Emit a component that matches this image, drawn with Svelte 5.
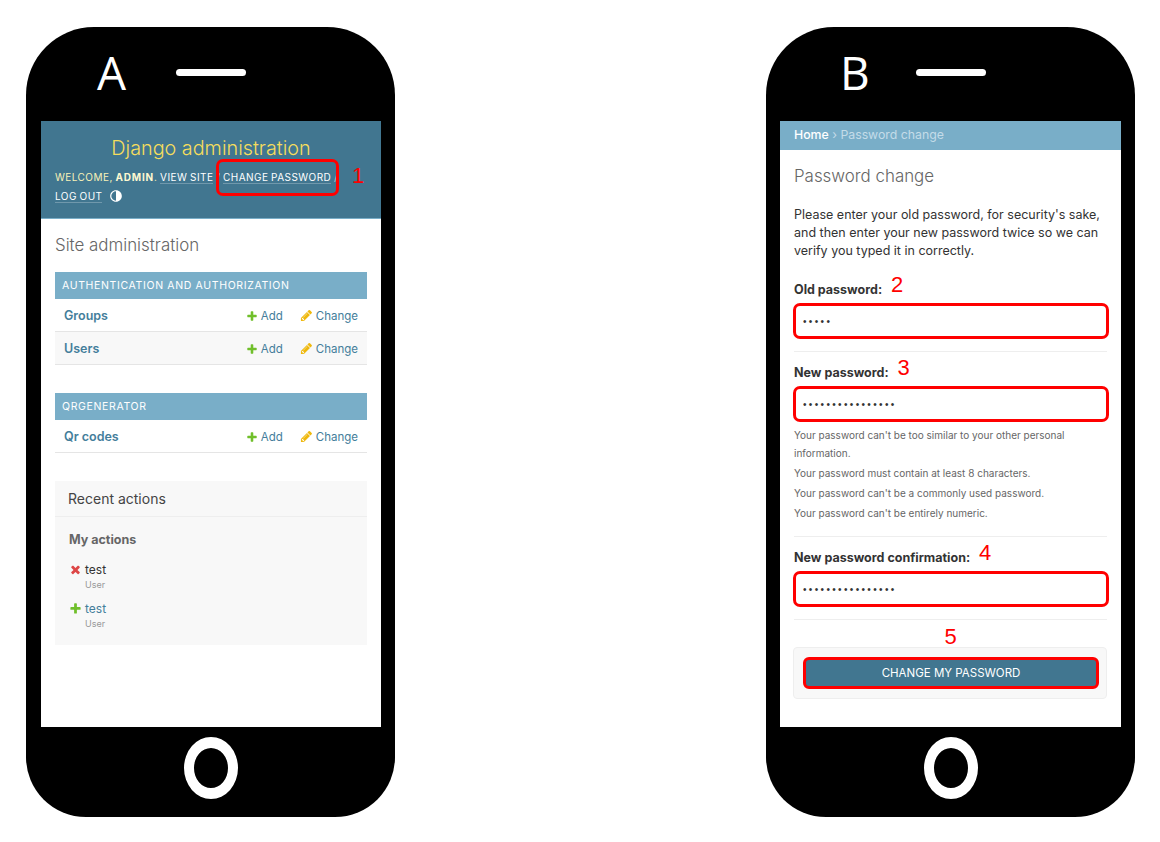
<script>
  const pw = "pw-placeholder-x";

  const modules = [
    { caption: "Authentication and Authorization", rows: ["Groups", "Users"] },
    { caption: "Qrgenerator", rows: ["Qr codes"] },
  ];

  const plus = "M1600 796v192q0 40-28 68t-68 28h-416v416q0 40-28 68t-68 28h-192q-40 0-68-28t-28-68v-416h-416q-40 0-68-28t-28-68v-192q0-40 28-68t68-28h416v-416q0-40 28-68t68-28h192q40 0 68 28t28 68v416h416q40 0 68 28t28 68z";
  const pencil = "M491 1536l91-91-235-235-91 91v107h128v128h107zm523-928q0-22-22-22-10 0-17 7l-542 542q-7 7-7 17 0 22 22 22 10 0 17-7l542-542q7-7 7-17zm-54-192l416 416-832 832h-416v-416zm683 96q0 53-37 90l-166 166-416-416 166-165q36-38 90-38 53 0 91 38l235 234q37 39 37 91z";
  const cross = "M1490 1322q0 40-28 68l-136 136q-28 28-68 28t-68-28l-294-294-294 294q-28 28-68 28t-68-28l-136-136q-28-28-28-68t28-68l294-294-294-294q-28-28-28-68t28-68l136-136q28-28 68-28t68 28l294 294 294-294q28-28 68-28t68 28l136 136q28 28 28 68t-28 68l-294 294 294 294q28 28 28 68z";
</script>

<main class="page">
  <!-- phone A: admin index -->
  <section class="phone">
    <div class="top">
      <span class="letter">A</span>
      <span class="speaker"></span>
    </div>
    <div class="screen">
      <header class="site-header">
        <div class="brand">Django administration</div>
        <div class="tools">
          <span class="welcome">Welcome, <b>admin</b>.</span>
          <a href="#site">View site</a> /
          <a href="#pw">Change password</a> /
          <br />
          <a href="#out">Log out</a>
          <svg class="toggle" viewBox="0 0 24 24" width="14" height="14">
            <path fill="#fff" d="M12 22C6.477 22 2 17.523 2 12S6.477 2 12 2s10 4.477 10 10-4.477 10-10 10zm0-2V4a8 8 0 1 0 0 16z" />
          </svg>
        </div>
        <span class="mark mark-link"></span>
        <span class="num num-1">1</span>
      </header>

      <div class="content">
        <h1>Site administration</h1>
        {#each modules as mod}
          <div class="module">
            <div class="caption">{mod.caption}</div>
            {#each mod.rows as row, i}
              <div class="row" class:alt={i % 2 === 1}>
                <a class="model" href="#m">{row}</a>
                <a class="act add" href="#a">
                  <svg viewBox="0 0 1792 1792" width="12" height="12"><path fill="#70bf2b" d={plus} /></svg>
                  Add
                </a>
                <a class="act change" href="#c">
                  <svg viewBox="0 0 1792 1792" width="13" height="13"><path fill="#efb80b" d={pencil} /></svg>
                  Change
                </a>
              </div>
            {/each}
          </div>
        {/each}

        <div class="recent">
          <h2>Recent actions</h2>
          <div class="recent-body">
            <h3>My actions</h3>
            <div class="entry">
              <svg viewBox="0 0 1792 1792" width="13" height="13"><path fill="#dd4646" d={cross} /></svg>
              <div>
                <div class="entry-name">test</div>
                <div class="entry-type">User</div>
              </div>
            </div>
            <div class="entry">
              <svg viewBox="0 0 1792 1792" width="13" height="13"><path fill="#70bf2b" d={plus} /></svg>
              <div>
                <a class="entry-name" href="#t">test</a>
                <div class="entry-type">User</div>
              </div>
            </div>
          </div>
        </div>
      </div>
    </div>
    <div class="bottom"><span class="home"></span></div>
  </section>

  <!-- phone B: password change -->
  <section class="phone phone-b">
    <div class="top">
      <span class="letter">B</span>
      <span class="speaker"></span>
    </div>
    <div class="screen">
      <nav class="crumbs"><a href="#home">Home</a> › Password change</nav>
      <form class="content form" onsubmit={(e) => e.preventDefault()}>
        <h1>Password change</h1>
        <p class="intro">Please enter your old password, for security's sake, and then enter your new password twice so we can verify you typed it in correctly.</p>

        <div class="field">
          <label for="old">Old password: <span class="num">2</span></label>
          <input id="old" type="password" value="xxxxx" />
        </div>

        <div class="field">
          <label for="new1">New password: <span class="num">3</span></label>
          <input id="new1" type="password" value={pw} />
          <ul class="help">
            <li>Your password can't be too similar to your other personal information.</li>
            <li>Your password must contain at least 8 characters.</li>
            <li>Your password can't be a commonly used password.</li>
            <li>Your password can't be entirely numeric.</li>
          </ul>
        </div>

        <div class="field">
          <label for="new2">New password confirmation: <span class="num">4</span></label>
          <input id="new2" type="password" value={pw} />
        </div>

        <div class="num num-5">5</div>
        <div class="submit-row">
          <button type="submit">Change my password</button>
        </div>
      </form>
    </div>
    <div class="bottom"><span class="home"></span></div>
  </section>
</main>

<style>
  :global(body) {
    margin: 0;
    background: #fff;
    font-family: Inter, "Liberation Sans", sans-serif;
  }

  a {
    text-decoration: none;
  }

  .page {
    display: flex;
    gap: 371px;
    padding: 27px 0 25px 26px;
  }

  .phone {
    width: 369px;
    height: 790px;
    background: #000;
    border-radius: 68px 68px 60px 60px;
    display: flex;
    flex-direction: column;
    overflow: hidden;
    flex: none;
  }

  .top {
    height: 94px;
    flex: none;
    position: relative;
  }

  .letter {
    position: absolute;
    left: 71px;
    top: 17px;
    color: #fff;
    font-family: "Open Sans", sans-serif;
    font-size: 46px;
    font-weight: 500;
    line-height: 56px;
  }

  .phone-b .letter {
    left: 74px;
  }

  .speaker {
    position: absolute;
    left: 150px;
    top: 42px;
    width: 70px;
    height: 7px;
    border-radius: 4px;
    background: #fff;
  }

  .screen {
    height: 606px;
    margin: 0 14px 0 15px;
    background: #fff;
    flex: none;
  }

  .phone-b .screen {
    margin: 0 14px;
  }

  .bottom {
    flex: 1;
    display: flex;
    justify-content: center;
    align-items: center;
    padding-bottom: 8px;
  }

  .home {
    width: 34px;
    height: 40px;
    border-style: solid;
    border-color: #fff;
    border-width: 11px 10px;
    border-radius: 50%;
  }

  .site-header {
    height: 98px;
    box-sizing: border-box;
    background: #417690;
    border-bottom: 1px solid #79aec8;
    padding: 14px 14px 0;
    position: relative;
    color: #f5dd5d;
  }

  .brand {
    font-size: 19.8px;
    line-height: 26px;
    text-align: center;
    font-weight: 300;
  }

  .tools {
    margin-top: 7px;
    font-size: 10px;
    line-height: 19px;
    letter-spacing: 0.45px;
    word-spacing: -0.5px;
    text-transform: uppercase;
    color: rgba(255, 255, 255, 0.6);
  }

  .welcome {
    color: #f8f2b8;
  }

  .tools b {
    color: #fdf8d0;
    letter-spacing: 0.8px;
  }

  .tools a {
    color: #fff;
    border-bottom: 1px solid rgba(255, 255, 255, 0.25);
  }

  .toggle {
    margin-left: 4px;
    vertical-align: -3px;
  }

  .mark {
    position: absolute;
    box-sizing: border-box;
    border: 3px solid #f00;
    border-radius: 7px;
  }

  .mark-link {
    left: 175px;
    top: 38px;
    width: 123px;
    height: 37px;
  }

  .num {
    color: #f00;
    font-family: "Liberation Sans", sans-serif;
    font-size: 22px;
    font-weight: 400;
    line-height: 20px;
    margin-left: 6px;
    vertical-align: 2px;
  }

  .num-1 {
    position: absolute;
    left: 305px;
    top: 45px;
  }

  .content {
    padding: 0 14px;
  }

  h1 {
    margin: 0;
    padding-top: 14px;
    font-size: 16.9px;
    line-height: 24px;
    font-weight: 300;
    color: #666;
  }

  .module {
    margin-top: 15px;
    margin-bottom: 28px;
  }

  .caption {
    height: 27px;
    line-height: 27px;
    background: #79aec8;
    color: #fff;
    padding-left: 7px;
    font-size: 10.5px;
    letter-spacing: 0.65px;
    text-transform: uppercase;
  }

  .row {
    height: 32px;
    border-bottom: 1px solid #e5e5e5;
    display: flex;
    align-items: center;
    padding: 0 9px;
    font-size: 11.5px;
  }

  .row.alt {
    background: #f8f8f8;
  }

  .model {
    flex: 1;
    font-weight: 600;
    font-size: 12.5px;
    color: #447e9b;
  }

  .act {
    color: #447e9b;
    display: flex;
    align-items: center;
    gap: 3px;
    padding-top: 1px;
  }

  .add {
    margin-right: 17px;
  }

  .recent {
    margin-top: 28px;
    background: #f8f8f8;
    height: 164px;
  }

  h2 {
    margin: 0;
    height: 35px;
    line-height: 35px;
    padding-left: 13px;
    font-size: 14px;
    font-weight: 400;
    color: #444;
    border-bottom: 1px solid #eee;
  }

  .recent-body {
    padding: 14px 14px 0;
  }

  h3 {
    margin: 0 0 13px;
    font-size: 12.5px;
    line-height: 18px;
    font-weight: 700;
    color: #666;
  }

  .entry {
    display: flex;
    gap: 3px;
    margin-bottom: 9px;
  }

  .entry svg {
    margin-top: 1px;
  }

  .entry-name {
    display: block;
    font-size: 12px;
    line-height: 16px;
    color: #333;
  }

  a.entry-name {
    color: #447e9b;
  }

  .entry-type {
    font-size: 9px;
    line-height: 14px;
    color: #999;
  }

  .crumbs {
    height: 29px;
    line-height: 27px;
    background: #79aec8;
    color: #c4dce8;
    padding-left: 14px;
    font-size: 12.3px;
  }

  .crumbs a {
    color: #fff;
    font-weight: 500;
  }

  .intro {
    margin: 18px 0 15px;
    font-size: 12.5px;
    line-height: 18px;
    color: #333;
  }

  .field {
    border-bottom: 1px solid #eee;
    padding-bottom: 12px;
    margin-top: 6px;
  }

  label {
    display: block;
    font-size: 12.5px;
    font-weight: 700;
    color: #333;
    line-height: 24px;
    height: 24px;
  }

  input {
    display: block;
    box-sizing: border-box;
    width: 316px;
    height: 36px;
    margin: 4px 0 0 -1px;
    padding: 0 7px;
    border: 3px solid #f00;
    border-radius: 7px;
    font-size: 10px;
    letter-spacing: 2.35px;
    color: #333;
    outline: none;
  }

  .help {
    list-style: none;
    margin: 4px 0 0;
    padding: 0;
    font-size: 10px;
    line-height: 18px;
    color: #666;
  }

  .help li {
    margin-bottom: 2px;
  }

  .num-5 {
    display: block;
    text-align: center;
    margin-left: 0;
    margin-top: 7px;
  }

  .submit-row {
    box-sizing: border-box;
    width: 314px;
    height: 52px;
    margin-left: -1px;
    padding: 9px 7px 9px 9px;
    background: #f8f8f8;
    border: 1px solid #eee;
    border-radius: 4px;
  }

  button {
    display: block;
    width: 100%;
    height: 32px;
    box-sizing: border-box;
    background: #417690;
    border: 3px solid #f00;
    border-radius: 6px;
    color: #fff;
    font-family: inherit;
    font-size: 11.5px;
    text-transform: uppercase;
  }
</style>
